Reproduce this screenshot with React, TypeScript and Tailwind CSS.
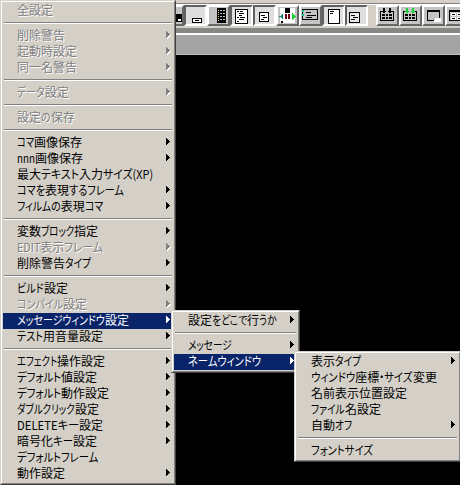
import { useLayoutEffect, useRef, type ReactNode } from 'react';

type Entry = { t: string; w: number; sub?: boolean; off?: boolean; hot?: boolean } | null;

const MAIN: Entry[] = [
  { t: '全設定', w: 36, off: true },
  null,
  { t: '削除警告', w: 48, sub: true, off: true },
  { t: '起動時設定', w: 60, sub: true, off: true },
  { t: '同一名警告', w: 60, sub: true, off: true },
  null,
  { t: 'データ設定', w: 52, sub: true, off: true },
  null,
  { t: '設定の保存', w: 58, off: true },
  null,
  { t: 'コマ画像保存', w: 65, sub: true },
  { t: 'nnn画像保存', w: 66, sub: true },
  { t: '最大テキスト入力サイズ(XP)', w: 136 },
  { t: 'コマを表現するフレーム', w: 107, sub: true },
  { t: 'フィルムの表現コマ', w: 86, sub: true },
  null,
  { t: '変数ブロック指定', w: 81, sub: true },
  { t: 'EDIT表示フレーム', w: 86, sub: true, off: true },
  { t: '削除警告タイプ', w: 74, sub: true },
  null,
  { t: 'ビルド設定', w: 51, sub: true },
  { t: 'コンパイル設定', w: 70, sub: true, off: true },
  { t: 'メッセージウィンドウ設定', w: 112, sub: true, hot: true },
  { t: 'テスト用音量設定', w: 86, sub: true },
  null,
  { t: 'エフェクト操作設定', w: 88, sub: true },
  { t: 'デフォルト値設定', w: 80, sub: true },
  { t: 'デフォルト動作設定', w: 92, sub: true },
  { t: 'ダブルクリック設定', w: 82, sub: true },
  { t: 'DELETEキー設定', w: 86, sub: true },
  { t: '暗号化キー設定', w: 80, sub: true },
  { t: 'デフォルトフレーム', w: 81 },
  { t: '動作設定', w: 48, sub: true },
];

const MESSAGE: Entry[] = [
  { t: '設定をどこで行うか', w: 89, sub: true },
  null,
  { t: 'メッセージ', w: 44, sub: true },
  { t: 'ネームウィンドウ', w: 73, sub: true, hot: true },
];

const NAME: Entry[] = [
  { t: '表示タイプ', w: 50, sub: true },
  { t: 'ウィンドウ座標・サイズ変更', w: 126 },
  { t: '名前表示位置設定', w: 96 },
  { t: 'ファイル名設定', w: 70 },
  { t: '自動オフ', w: 41, sub: true },
  null,
  { t: 'フォントサイズ', w: 62 },
];

/* Kanji keep their full 12px cell; kana and latin runs are condensed to fill the rest of the width. */
function Label({ text, width }: { text: string; width: number }) {
  const ref = useRef<HTMLSpanElement>(null);
  const runs = text.match(/[\u4e00-\u9fff]+|[^\u4e00-\u9fff]+/g) ?? [];
  useLayoutEffect(() => {
    const fit = () => {
      let kanji = 0;
      let natural = 0;
      const soft: { box: HTMLElement; ink: HTMLElement; w: number }[] = [];
      for (const box of Array.from(ref.current?.children ?? []) as HTMLElement[]) {
        const ink = box.firstElementChild as HTMLElement;
        if (/[\u4e00-\u9fff]/.test(ink.textContent ?? '')) kanji += (ink.textContent ?? '').length * 12;
        else {
          soft.push({ box, ink, w: ink.offsetWidth });
          natural += ink.offsetWidth;
        }
      }
      const k = natural ? (width - kanji) / natural : 1;
      for (const s of soft) {
        s.box.style.width = `${s.w * k}px`;
        s.ink.style.transform = `scaleX(${k})`;
      }
    };
    fit();
    document.fonts.ready.then(fit);
  }, [text, width]);
  return (
    <span ref={ref} className="flex">
      {runs.map((r, i) => (
        <span key={i} className="block">
          <span className={`block w-max origin-left ${/[\u4e00-\u9fff]/.test(r) ? '' : "[font-feature-settings:'palt']"}`}>{r}</span>
        </span>
      ))}
    </span>
  );
}

function Menu({ items, className }: { items: Entry[]; className: string }) {
  return (
    <div className={`absolute border border-t-[#d4d0c8] border-l-[#d4d0c8] border-r-[#404040] border-b-[#404040] ${className}`}>
      <div className="border border-t-white border-l-white border-r-[#808080] border-b-[#808080] bg-[#d4d0c8] p-px">
        {items.map((e, i) =>
          e ? (
            <div
              key={i}
              className={`flex h-4 items-center justify-between pr-[2px] pl-[14px] text-[12px] leading-4 ${
                e.hot ? 'bg-[#0a246a] text-white' : e.off ? 'text-[#808080] [text-shadow:1px_1px_0_#fff]' : 'text-black'
              }`}
            >
              <div className="-mt-[3px]">
                <Label text={e.t} width={e.w} />
              </div>
              {e.sub && (
                <svg width="5" height="8" viewBox="0 0 5 8" shapeRendering="crispEdges" fill="currentColor" className="-mt-[2px] shrink-0 overflow-visible">
                  {e.off && <path d="M1 1h1v1h1v1h1v1h1v1h-1v1h-1v1h-1v1h-1z" fill="#fff" />}
                  <path d="M0 0h1v1h1v1h1v1h1v1h-1v1h-1v1h-1v1h-1z" />
                </svg>
              )}
            </div>
          ) : (
            <div key={i} className="h-[9px] px-px pt-[3px]">
              <div className="h-[2px] border-t border-b border-t-[#808080] border-b-white" />
            </div>
          ),
        )}
      </div>
    </div>
  );
}

function Tool({ down, children }: { down?: boolean; children: ReactNode }) {
  return (
    <div
      className={`h-[21px] w-[23px] shrink-0 border-2 ${
        down
          ? 'border-t-[#606060] border-r-white border-b-white border-l-[#606060] bg-[#dedede]'
          : 'border-t-white border-r-[#686868] border-b-[#686868] border-l-white bg-[#c4c4c4]'
      }`}
    >
      <svg width="19" height="17" viewBox="0 0 19 17" shapeRendering="crispEdges" className="block">
        {children}
      </svg>
    </div>
  );
}

function Grid({ arrow }: { arrow: string }) {
  return (
    <>
      <path d="M2.5 4v9.5h13V4M2.5 4.5h2M13.5 4.5h2" fill="none" stroke="#000" />
      <path d="M4 7h3v2H4zM8 7h2v2H8zM11 7h3v2h-3zM4 10h3v2H4zM8 10h2v2H8zM11 10h3v2h-3z" />
      <path d="M5 1h2v3h1v1H7v1H5V5H4V4h1zM11 1h2v3h1v1h-1v1h-2V5h-1V4h1z" fill={arrow} />
    </>
  );
}

export default function App() {
  return (
    <div className="relative h-[485px] w-[460px] overflow-hidden bg-black font-['Noto_Sans_CJK_JP','Noto_Sans',sans-serif]">
      <div className="flex h-[28px] flex-col bg-[#d4d0c8]">
        <div className="h-[4px] border-b border-[#808080]" />
        <div className="h-px bg-white" />
        <div className="flex pl-[161px]">
          <Tool>
            <path d="M10 7h9v8h-9z" />
            <path d="M15 12h3v2h-3z" fill="#fff" />
          </Tool>
          <Tool down>
            <path d="M6.5 11.5h9v4h-9z" fill="#fff" stroke="#000" />
            <path d="M9 13h4v1H9z" />
          </Tool>
          <Tool>
            <path d="M8 1h9v15H8z" />
            <path d="M9.5 3v12" stroke="#e8e070" strokeDasharray="1 1" />
            <path d="M11 3.5h5M11 6.5h5M11 9.5h5M11 12.5h5" stroke="#b8c8c8" strokeDasharray="2 1" />
          </Tool>
          <Tool down>
            <path d="M3.5 2.5h12v14h-12z" fill="#fff" stroke="#000" />
            <path d="M5 4.5h2M8 4.5h3M7 6.5h5M7 8.5h3M5 10.5h2M8 10.5h5M7 12.5h5M5 14.5h2" stroke="#000" />
          </Tool>
          <Tool down>
            <path d="M4.5 5.5h9v9h-9z" fill="#fff" stroke="#000" />
            <path d="M6 8.5h4M8 10.5h4M6 12.5h3" stroke="#000" />
          </Tool>
          <Tool>
            <path d="M2 1h15v15H2z" fill="#fff" />
            <path d="M7 1h5v5H7zM3 14h2v2H3z" />
            <path d="M1 9h2V8h1V7h1v5H4v-1H3v-1H1z" fill="#168078" />
            <path d="M7 7h2v5H7zM10 7h2v5h-2z" fill="#700018" />
            <path d="M14 6h1v1h1v1h1v1h1v1h-1v1h-1v1h-1v1h-1z" fill="#20d040" />
          </Tool>
          <Tool>
            <path d="M1.5 2.5h15v10h-15z" fill="#c4c4c4" stroke="#000" />
            <path d="M1 3h2v2H1zM1 7h2v2H1z" fill="#20c080" />
            <path d="M5 5.5h5M6 8.5h9M5 10.5h6" stroke="#000" />
          </Tool>
          <Tool down>
            <path d="M4.5 2.5h11v14h-11z" fill="#fff" stroke="#000" />
            <path d="M6 4.5h4M6 6.5h3" stroke="#000" />
          </Tool>
          <Tool down>
            <path d="M2.5 5.5h10v10h-10z" fill="#e8e8e8" stroke="#000" />
            <path d="M4 8.5h4M6 10.5h5M4 12.5h4" stroke="#000" />
          </Tool>
          <div className="w-2 shrink-0" />
          <Tool>
            <Grid arrow="#000" />
          </Tool>
          <Tool>
            <Grid arrow="#18d038" />
          </Tool>
          <Tool>
            <path d="M3 3h13v2H3z" />
            <path d="M3.5 3.5h12v10h-12z" fill="none" stroke="#000" />
            <path d="M11 11h6v4h-7v-2h1z" fill="#fff" />
          </Tool>
          <Tool>
            <path d="M2 3h16v2H2z" />
            <path d="M2.5 3.5h15v10h-15z" fill="none" stroke="#000" />
            <path d="M4 6h5v3H4zM10 6h5v3h-5zM4 10h5v3H4zM10 10h5v3h-5z" fill="#fff" />
            <path d="M5 7.5h3M11 7.5h3M5 11.5h3M11 11.5h3" stroke="#000" />
          </Tool>
        </div>
      </div>
      <div className="h-[5px] bg-[#868686]" />
      <div className="h-[2px] bg-white" />
      <div className="h-[19px] bg-[#a4a4a4]" />
      <div className="h-px bg-[#c0c0c0]" />

      <Menu items={MAIN} className="top-0 left-0 w-[176px]" />
      <Menu items={MESSAGE} className="top-[310px] left-[171px] w-[129px]" />
      <Menu items={NAME} className="top-[351px] left-[294px] w-[167px]" />
    </div>
  );
}
